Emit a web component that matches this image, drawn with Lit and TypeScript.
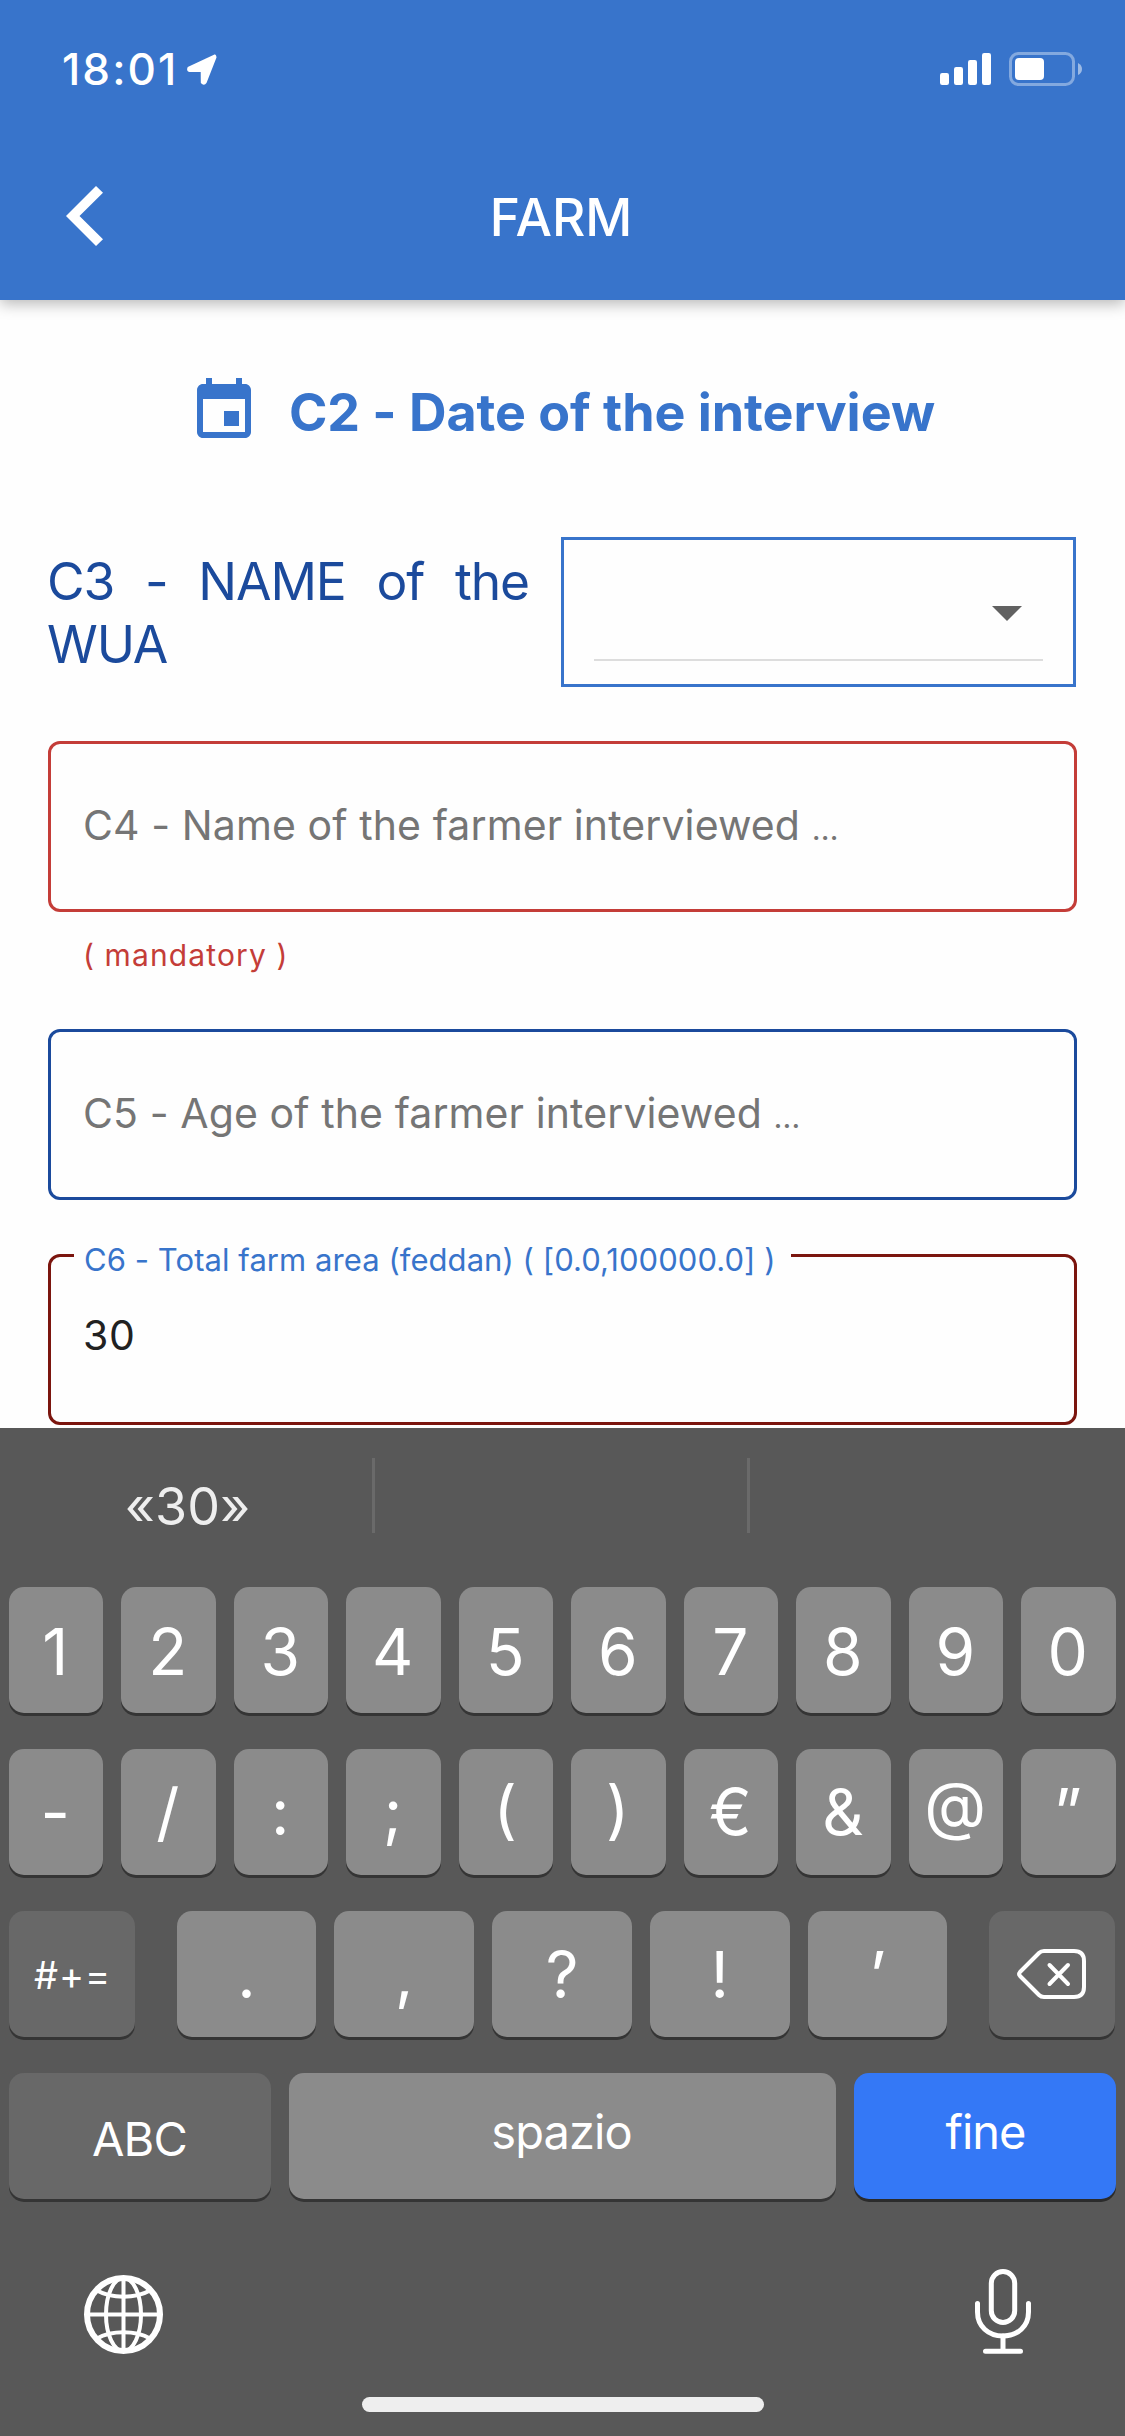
import { LitElement, html, css, nothing } from "lit";
import { customElement, property } from "lit/decorators.js";
import { classMap } from "lit/directives/class-map.js";

@customElement("status-bar")
export class StatusBar extends LitElement {
  static styles = css`
    :host { display: flex; align-items: center; height: 132px; padding: 6px 43px 0 62px; box-sizing: border-box; color: #fff; }
    .time { font-size: 44px; font-weight: 500; line-height: 50px; letter-spacing: 2.1px; margin-right: 8px; }
    .spacer { flex: 1; }
    svg { display: block; flex: none; }
    .arrow { margin-top: -1px; }
    .signal { margin-right: 18px; }
  `;
  render() {
    return html`
      <span class="time">18:01</span>
      <svg class="arrow" width="32" height="32" viewBox="0 0 32 32" fill="#fff" stroke="#fff" stroke-width="3" stroke-linejoin="round">
        <path d="M28.6 3 L2.9 15.2 Q2 17.3 3.6 17.4 L16.2 17.5 L16.3 29.4 Q17.8 31.3 19.2 29.2 L29 4.2 Z" />
      </svg>
      <span class="spacer"></span>
      <svg class="signal" width="51" height="34" viewBox="0 0 51 34" fill="#fff">
        <rect x="0" y="21" width="9" height="12" rx="2.2" />
        <rect x="14" y="15" width="9" height="18" rx="2.2" />
        <rect x="28" y="8" width="9" height="25" rx="2.2" />
        <rect x="42" y="1" width="9" height="32" rx="2.2" />
      </svg>
      <svg width="73" height="34" viewBox="0 0 73 34">
        <rect x="1.5" y="1.5" width="63" height="31" rx="8" fill="none" stroke="#fff" stroke-opacity=".38" stroke-width="3" />
        <path d="M69 11 Q73 13 73 17 Q73 21 69 23 Z" fill="#fff" fill-opacity=".5" />
        <rect x="6" y="6" width="29" height="22" rx="4" fill="#fff" />
      </svg>
    `;
  }
}

@customElement("form-field")
export class FormField extends LitElement {
  @property() placeholder = "";
  @property() label = "";
  @property() value = "";
  @property() hint = "";
  @property() tone = "blue";

  static styles = css`
    :host { display: block; }
    .box { position: relative; display: flex; align-items: center; height: 171px; box-sizing: border-box; border: 3px solid #1b4a9c; border-radius: 12px; padding: 0 32px 3px; }
    .box.red { border-color: #c43d38; }
    .box.dark { border-color: #7b150e; padding-bottom: 9px; }
    .placeholder { font-size: 41px; line-height: 54px; letter-spacing: 0.1px; color: #757575; white-space: nowrap; }
    .more { font-size: 31px; line-height: 1; }
    .value { font-size: 41px; line-height: 54px; letter-spacing: 0.6px; color: #212121; }
    .label { position: absolute; left: 23px; top: -15px; height: 36px; line-height: 36px; padding: 0 15px 0 10px; background: #fefefe; color: #3874cb; font-size: 31px; letter-spacing: 0.06px; white-space: nowrap; }
    .hint { margin: 23px 0 0 35px; height: 40px; line-height: 40px; font-size: 30px; letter-spacing: 1.12px; color: #c43d38; }
  `;
  render() {
    return html`
      <div class=${classMap({ box: true, [this.tone]: true })}>
        ${this.label ? html`<span class="label">${this.label}</span>` : nothing}
        ${this.value
          ? html`<span class="value">${this.value}</span>`
          : html`<span class="placeholder">${this.placeholder} <span class="more">…</span></span>`}
      </div>
      ${this.hint ? html`<div class="hint">${this.hint}</div>` : nothing}
    `;
  }
}

@customElement("soft-keyboard")
export class SoftKeyboard extends LitElement {
  static styles = css`
    :host { display: flex; flex-direction: column; height: 1008px; background: #585858; color: #fff; }
    .suggestions { display: grid; grid-template-columns: repeat(3, 375px); height: 159px; }
    .suggestion { display: flex; align-items: center; justify-content: center; padding-bottom: 3px; box-sizing: border-box; font-size: 52px; color: #eee; background: linear-gradient(#6a6a6a, #6a6a6a) no-repeat 372px 30px / 3px 75px; }
    .suggestion:last-child { background: none; }
    .rows { display: flex; flex-direction: column; gap: 36px; padding: 0 9.5px 0 8.5px; }
    .row { display: flex; gap: 18px; }
    .key { flex: 1 1 0; min-width: 0; height: 126px; box-sizing: border-box; display: flex; align-items: center; justify-content: center; border-radius: 15px; background: #8b8b8b; box-shadow: 0 3px 0 #353535; font-size: 64px; line-height: 80px; padding-top: 2px; }
    .digits .key { padding: 4px 1px 0 0; }
    .symbols .key { padding: 0 1px 0 0; }
    .raised { font-feature-settings: "case" 1; }
    .side { flex: none; width: 126px; background: #686868; font-size: 38px; letter-spacing: 0.9px; padding: 2px 0 0 2px; }
    .side.left { margin-right: 24px; }
    .side.right { margin-left: 24px; padding: 0; }
    .wide { flex: none; width: 262px; font-size: 47px; letter-spacing: -1px; padding: 0 0 8px; }
    .abc { background: #686868; letter-spacing: -0.8px; padding: 6px 0 0 0; }
    .space { flex: 1 1 0; font-size: 47px; letter-spacing: -0.9px; padding: 0 1px 8px 0; }
    .done { background: #3478f6; box-shadow: 0 3px 0 #2b2b2b; padding-left: 2px; }
    .tools { display: flex; justify-content: space-between; align-items: flex-end; height: 85px; margin-top: 70px; padding: 0 94px 0 84px; }
    .home { align-self: center; width: 402px; height: 15px; margin-top: 43px; border-radius: 8px; background: #eee; }
    svg { display: block; }
  `;

  private static raised = new Set(["(", ")", "@"]);

  private keys(chars: string[]) {
    return chars.map((c) => html`<div class=${classMap({ key: true, raised: SoftKeyboard.raised.has(c) })}>${c}</div>`);
  }

  render() {
    return html`
      <div class="suggestions">
        <div class="suggestion">«30»</div>
        <div class="suggestion"></div>
        <div class="suggestion"></div>
      </div>
      <div class="rows">
        <div class="row digits">${this.keys(["1", "2", "3", "4", "5", "6", "7", "8", "9", "0"])}</div>
        <div class="row symbols">${this.keys(["-", "/", ":", ";", "(", ")", "€", "&", "@", "”"])}</div>
        <div class="row">
          <div class="key side left">#+=</div>
          ${this.keys([".", ",", "?", "!", "’"])}
          <div class="key side right">
            <svg width="70" height="52" viewBox="0 0 70 52" fill="none" stroke="#fff" stroke-width="4" stroke-linecap="round" stroke-linejoin="round">
              <path d="M27 3 H57 Q67 3 67 13 V39 Q67 49 57 49 H27 Q24 49 22 47 L3 28 Q1.2 26 3 24 L22 5 Q24 3 27 3 Z" />
              <path d="M32.5 17 L51 36 M51 17 L32.5 36" />
            </svg>
          </div>
        </div>
        <div class="row">
          <div class="key wide abc">ABC</div>
          <div class="key space">spazio</div>
          <div class="key wide done">fine</div>
        </div>
      </div>
      <div class="tools">
        <svg width="79" height="79" viewBox="0 0 79 79" fill="none" stroke="#fff" stroke-width="4">
          <circle cx="39.5" cy="39.5" r="36.5" stroke-width="6" />
          <path d="M39.5 3 V76 M3 39.5 H76" />
          <ellipse cx="39.5" cy="39.5" rx="17.5" ry="36.5" />
          <path d="M13 15.5 Q24 21.7 39.5 21.7 Q55 21.7 66 15.5 M13 63.5 Q24 57.3 39.5 57.3 Q55 57.3 66 63.5" />
        </svg>
        <svg width="56" height="85" viewBox="0 0 56 85" fill="none" stroke="#fff" stroke-width="5" stroke-linecap="round">
          <rect x="16.3" y="2.5" width="23.4" height="51" rx="11.7" />
          <path d="M2.5 34.5 V43 C2.5 57 13 67 28 67 C43 67 53.5 57 53.5 43 V34.5" />
          <path d="M28 67 V82 M10.5 82.3 H45.5" />
        </svg>
      </div>
      <div class="home"></div>
    `;
  }
}

@customElement("app-root")
export class AppRoot extends LitElement {
  static styles = css`
    :host { display: flex; flex-direction: column; width: 1125px; height: 2436px; overflow: hidden; background: #fefefe; font-family: Inter, "Liberation Sans", sans-serif; }
    header { flex: none; height: 300px; background: #3874cb; box-shadow: 0 4px 14px rgba(0, 0, 0, 0.28); }
    .appbar { display: grid; grid-template-columns: 200px 1fr 200px; align-items: center; height: 168px; color: #fff; }
    .back { display: block; margin-left: 66px; }
    h1 { margin: 2px 3px 0 0; text-align: center; font-size: 51.5px; line-height: 62px; font-weight: 500; }
    main { flex: none; height: 1128px; box-sizing: border-box; padding: 75px 48px 0; display: flex; flex-direction: column; gap: 54px; overflow: hidden; }
    .date { display: flex; align-items: center; justify-content: center; gap: 29px; height: 72px; margin-bottom: 36px; color: #3874cb; }
    .date span { font-size: 52px; font-weight: 700; line-height: 62px; letter-spacing: -0.04px; padding: 4px 2px 0 0; }
    .wua { display: flex; align-items: center; height: 150px; margin-right: 1px; }
    .wua p { margin: 0 32px 0 -1px; width: 482px; padding-top: 1px; font-size: 51.5px; line-height: 63px; letter-spacing: -1.1px; text-align: justify; color: #1b4a9c; }
    .select { flex: 1; height: 150px; box-sizing: border-box; border: 3px solid #3874cb; padding: 0 30px; display: flex; }
    .line { flex: 1; display: flex; justify-content: flex-end; align-items: flex-end; height: 121px; box-sizing: border-box; border-bottom: 2px solid #ddd; padding: 0 21px 38px 0; }
    svg { flex: none; }
    form-field { flex: none; }
  `;
  render() {
    return html`
      <header>
        <status-bar></status-bar>
        <div class="appbar">
          <svg class="back" width="37" height="60" viewBox="0 0 37 60" fill="#fff">
            <path d="M30 0 L37 6.8 L13.5 30 L37 53.2 L30 60 L0 30 Z" />
          </svg>
          <h1>FARM</h1>
        </div>
      </header>
      <main>
        <div class="date">
          <svg width="72" height="72" viewBox="0 0 24 24" fill="currentColor">
            <path d="M17 12h-5v5h5v-5zM16 1v2H8V1H6v2H5c-1.11 0-1.99.9-1.99 2L3 19c0 1.1.89 2 2 2h14c1.1 0 2-.9 2-2V5c0-1.1-.9-2-2-2h-1V1h-2zm3 18H5V8h14v11z" />
          </svg>
          <span>C2 - Date of the interview</span>
        </div>
        <div class="wua">
          <p>C3 - NAME of the WUA</p>
          <div class="select">
            <div class="line">
              <svg width="30" height="15" viewBox="0 0 30 15" fill="#616161"><path d="M0 0 H30 L15 15 Z" /></svg>
            </div>
          </div>
        </div>
        <form-field tone="red" placeholder="C4 - Name of the farmer interviewed" hint="( mandatory )"></form-field>
        <form-field placeholder="C5 - Age of the farmer interviewed"></form-field>
        <form-field tone="dark" label="C6 - Total farm area (feddan) ( [0.0,100000.0] )" value="30"></form-field>
      </main>
      <soft-keyboard></soft-keyboard>
    `;
  }
}
